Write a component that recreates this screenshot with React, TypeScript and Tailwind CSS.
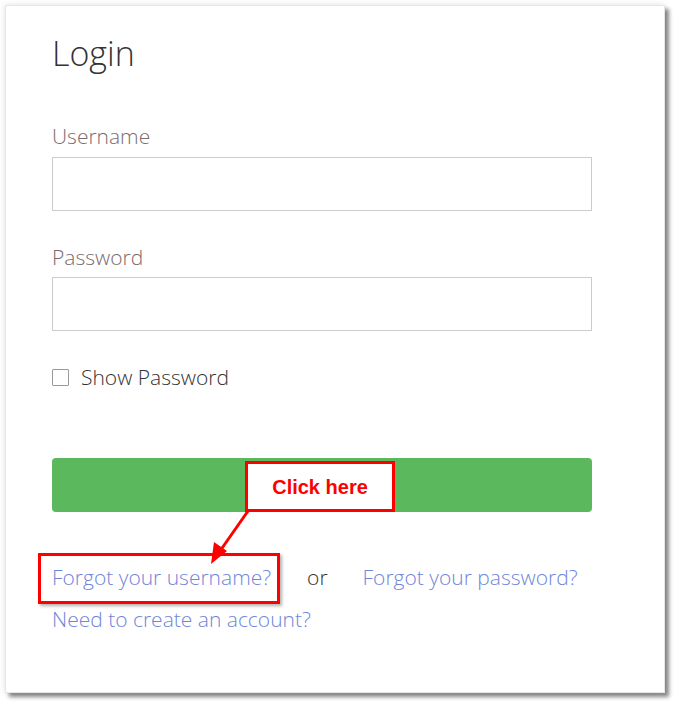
export default function App() {
  return (
    <div className="relative w-[674px] h-[704px] bg-white overflow-hidden" style={{ fontFamily: '"Open Sans", sans-serif' }}>
      {/* card */}
      <div className="ml-[5px] mt-[5px] w-[660px] h-[688px] bg-white border border-[#e6e6e6] shadow-[4px_4px_4px_rgba(0,0,0,0.45),0_0_6px_rgba(0,0,0,0.12)] px-[46px] pt-[27px]">
        <h1 className="text-[34px] leading-[40px] font-light text-[#333]">Login</h1>

        <label className="block mt-[49px] text-[21px] leading-[28px] font-light text-[#7a6c6c]">Username</label>
        <input className="block mt-[7px] w-[540px] h-[54px] border border-[#cccccc] outline-none" />

        <label className="block mt-[32px] text-[21px] leading-[28px] font-light text-[#7a6c6c]">Password</label>
        <input type="password" className="block mt-[6px] w-[540px] h-[54px] border border-[#cccccc] outline-none" />

        <div className="flex items-center mt-[32px] h-[28px]">
          <span className="w-[17px] h-[17px] border border-[#999] rounded-[1px] bg-white" />
          <span className="ml-[12px] text-[21px] leading-[28px] font-light text-[#333]">Show Password</span>
        </div>

        <button className="block mt-[67px] w-[540px] h-[54px] rounded-[4px] bg-[#5cb85c]" />

        <div className="mt-[44px] flex text-[21px] leading-[42px] font-light">
          <a className="text-[#6f86d8]">Forgot your username?</a>
          <span className="ml-[36px] text-[#333]">or</span>
          <a className="ml-[35px] text-[#6f86d8]">Forgot your password?</a>
        </div>
        <div className="text-[21px] leading-[42px] font-light">
          <a className="text-[#6f86d8]">Need to create an account?</a>
        </div>
      </div>

      {/* annotation: callout */}
      <div className="absolute left-[245px] top-[461px] w-[150px] h-[51px] bg-white border-[3px] border-[#ff0000] flex items-center justify-center">
        <span className="text-[20px] font-bold text-[#ff0000]" style={{ fontFamily: '"Liberation Sans", Arial, sans-serif' }}>Click here</span>
      </div>

      {/* annotation: arrow */}
      <svg className="absolute left-0 top-0" width="674" height="704" viewBox="0 0 674 704">
        <line x1="248" y1="511" x2="220" y2="551" stroke="#ff0000" strokeWidth="3" />
        <polygon points="211,564 214,542 227,551" fill="#ff0000" />
      </svg>

      {/* annotation: highlight box */}
      <div className="absolute left-[38px] top-[553px] w-[242px] h-[51px] border-[3px] border-[#ff0000] shadow-[2px_2px_3px_rgba(0,0,0,0.3)]" />
    </div>
  );
}
